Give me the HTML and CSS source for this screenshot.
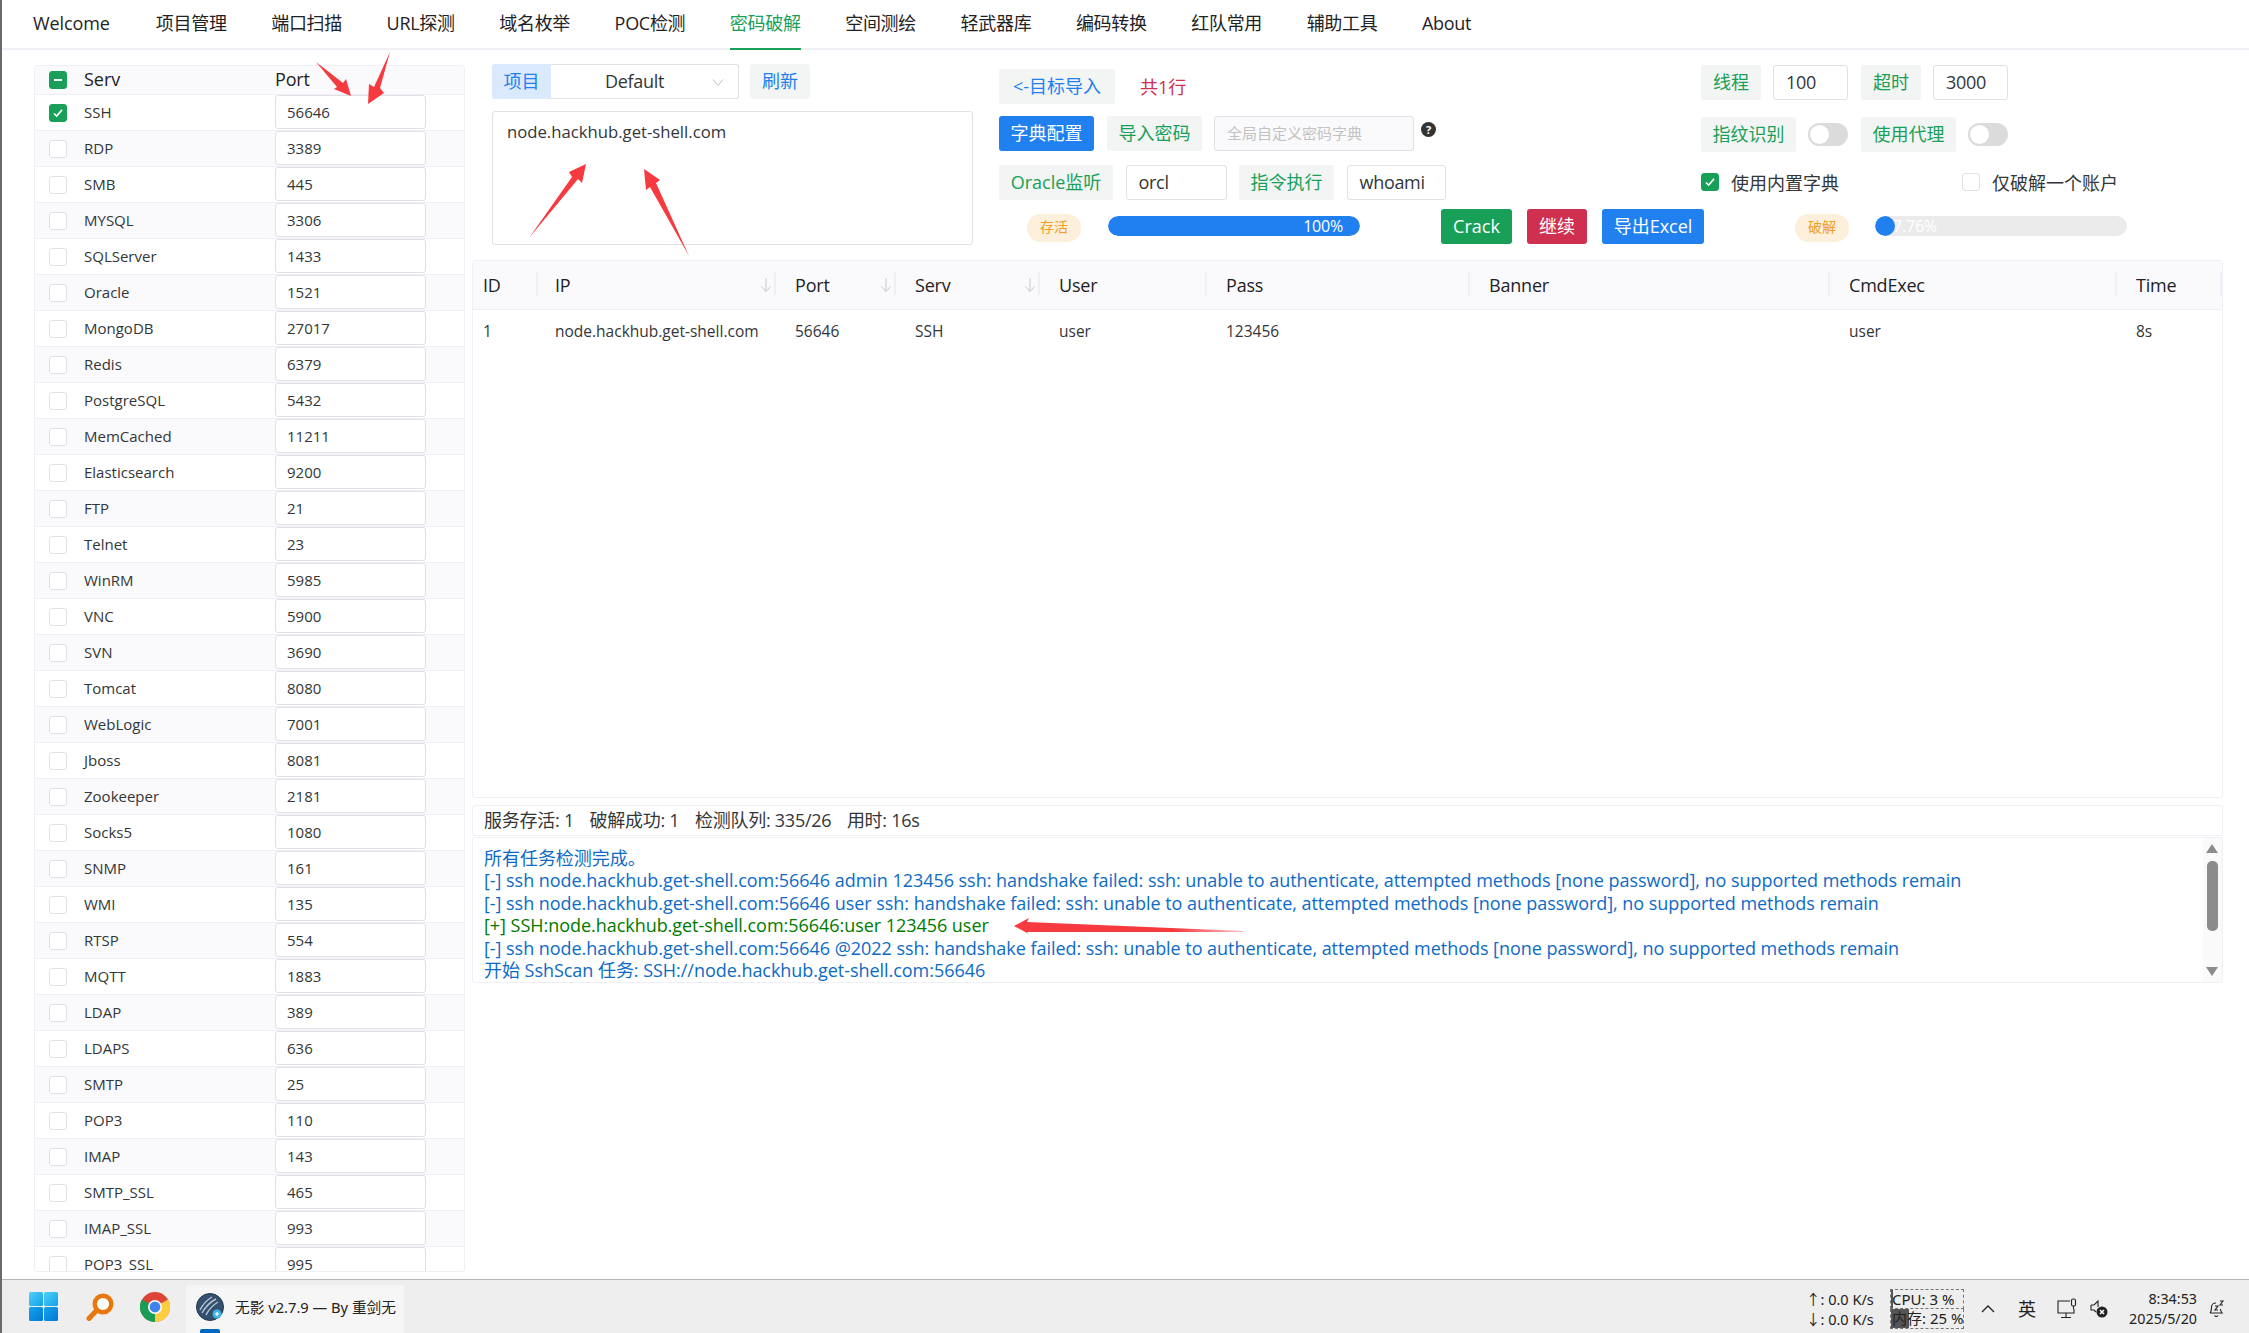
FILE: index.html
```html
<!DOCTYPE html>
<html lang="zh">
<head>
<meta charset="utf-8">
<title>无影</title>
<link rel="stylesheet" href="styles.css">
</head>
<body>
<div class="app">
  <nav class="nav">
    <span class="tab">Welcome</span><span class="tab">项目管理</span><span class="tab">端口扫描</span><span class="tab">URL探测</span><span class="tab">域名枚举</span><span class="tab">POC检测</span><span class="tab active">密码破解</span><span class="tab">空间测绘</span><span class="tab">轻武器库</span><span class="tab">编码转换</span><span class="tab">红队常用</span><span class="tab">辅助工具</span><span class="tab">About</span>
  </nav>
  <main class="work">
    <section class="services">
      <div class="svc-row svc-head"><span class="cb on minus"></span><span class="svc-name">Serv</span><span class="svc-port-h">Port</span></div>
      <div class="svc-row"><span class="cb on"><svg viewBox="0 0 18 18"><path d="M4.5 9.5l3 3 6-7" class="tick"/></svg></span><span class="svc-name">SSH</span><span class="port">56646</span></div>
      <div class="svc-row"><span class="cb"></span><span class="svc-name">RDP</span><span class="port">3389</span></div>
      <div class="svc-row"><span class="cb"></span><span class="svc-name">SMB</span><span class="port">445</span></div>
      <div class="svc-row"><span class="cb"></span><span class="svc-name">MYSQL</span><span class="port">3306</span></div>
      <div class="svc-row"><span class="cb"></span><span class="svc-name">SQLServer</span><span class="port">1433</span></div>
      <div class="svc-row"><span class="cb"></span><span class="svc-name">Oracle</span><span class="port">1521</span></div>
      <div class="svc-row"><span class="cb"></span><span class="svc-name">MongoDB</span><span class="port">27017</span></div>
      <div class="svc-row"><span class="cb"></span><span class="svc-name">Redis</span><span class="port">6379</span></div>
      <div class="svc-row"><span class="cb"></span><span class="svc-name">PostgreSQL</span><span class="port">5432</span></div>
      <div class="svc-row"><span class="cb"></span><span class="svc-name">MemCached</span><span class="port">11211</span></div>
      <div class="svc-row"><span class="cb"></span><span class="svc-name">Elasticsearch</span><span class="port">9200</span></div>
      <div class="svc-row"><span class="cb"></span><span class="svc-name">FTP</span><span class="port">21</span></div>
      <div class="svc-row"><span class="cb"></span><span class="svc-name">Telnet</span><span class="port">23</span></div>
      <div class="svc-row"><span class="cb"></span><span class="svc-name">WinRM</span><span class="port">5985</span></div>
      <div class="svc-row"><span class="cb"></span><span class="svc-name">VNC</span><span class="port">5900</span></div>
      <div class="svc-row"><span class="cb"></span><span class="svc-name">SVN</span><span class="port">3690</span></div>
      <div class="svc-row"><span class="cb"></span><span class="svc-name">Tomcat</span><span class="port">8080</span></div>
      <div class="svc-row"><span class="cb"></span><span class="svc-name">WebLogic</span><span class="port">7001</span></div>
      <div class="svc-row"><span class="cb"></span><span class="svc-name">Jboss</span><span class="port">8081</span></div>
      <div class="svc-row"><span class="cb"></span><span class="svc-name">Zookeeper</span><span class="port">2181</span></div>
      <div class="svc-row"><span class="cb"></span><span class="svc-name">Socks5</span><span class="port">1080</span></div>
      <div class="svc-row"><span class="cb"></span><span class="svc-name">SNMP</span><span class="port">161</span></div>
      <div class="svc-row"><span class="cb"></span><span class="svc-name">WMI</span><span class="port">135</span></div>
      <div class="svc-row"><span class="cb"></span><span class="svc-name">RTSP</span><span class="port">554</span></div>
      <div class="svc-row"><span class="cb"></span><span class="svc-name">MQTT</span><span class="port">1883</span></div>
      <div class="svc-row"><span class="cb"></span><span class="svc-name">LDAP</span><span class="port">389</span></div>
      <div class="svc-row"><span class="cb"></span><span class="svc-name">LDAPS</span><span class="port">636</span></div>
      <div class="svc-row"><span class="cb"></span><span class="svc-name">SMTP</span><span class="port">25</span></div>
      <div class="svc-row"><span class="cb"></span><span class="svc-name">POP3</span><span class="port">110</span></div>
      <div class="svc-row"><span class="cb"></span><span class="svc-name">IMAP</span><span class="port">143</span></div>
      <div class="svc-row"><span class="cb"></span><span class="svc-name">SMTP_SSL</span><span class="port">465</span></div>
      <div class="svc-row"><span class="cb"></span><span class="svc-name">IMAP_SSL</span><span class="port">993</span></div>
      <div class="svc-row"><span class="cb"></span><span class="svc-name">POP3_SSL</span><span class="port">995</span></div>
    </section>
    <section class="panel">
      <div class="toolbar">
        <div class="targets">
          <div class="targets-top">
            <div class="group">
              <span class="addon">项目</span>
              <span class="select">Default<svg class="chev" viewBox="0 0 14 14"><path d="M2 4.5l5 6 5-6"/></svg></span>
            </div>
            <span class="btn blue-t w60">刷新</span>
          </div>
          <div class="textarea">node.hackhub.get-shell.com</div>
        </div>
        <div class="controls">
          <div class="controls-top">
            <div class="col-b">
              <div class="line line1"><span class="btn blue-t w116">&lt;-目标导入</span><span class="count">共1行</span></div>
              <div class="line line2"><span class="btn solid-blue w95">字典配置</span><span class="btn green-t w95">导入密码</span><span class="input dict">全局自定义密码字典</span><span class="help">?</span></div>
              <div class="line line3"><span class="btn green-t w114">Oracle监听</span><span class="input w101">orcl</span><span class="btn green-t w95">指令执行</span><span class="input w99">whoami</span></div>
            </div>
            <div class="col-c">
              <div class="line c1"><span class="btn green-t w60">线程</span><span class="input w75">100</span><span class="btn green-t w60 ml13">超时</span><span class="input w75">3000</span></div>
              <div class="line c2"><span class="btn green-t w95">指纹识别</span><span class="switch"></span><span class="btn green-t w95 ml13">使用代理</span><span class="switch"></span></div>
              <div class="line c3"><span class="check-wrap"><span class="cb on"><svg viewBox="0 0 18 18"><path d="M4.5 9.5l3 3 6-7" class="tick"/></svg></span><span>使用内置字典</span></span><span class="check-wrap"><span class="cb"></span><span>仅破解一个账户</span></span></div>
            </div>
          </div>
          <div class="line status-line">
            <span class="tag tag1">存活</span>
            <span class="bar bar1"><span class="fill full">100%</span></span>
            <span class="btn solid-green act-crack">Crack</span>
            <span class="btn solid-red act-go">继续</span>
            <span class="btn solid-blue act-xls">导出Excel</span>
            <span class="tag tag2">破解</span>
            <span class="bar bar2"><span class="fill dot"></span><span class="bar-text">7.76%</span></span>
          </div>
        </div>
      </div>

      <div class="results">
        <div class="res-row res-head">
          <span class="cell sep">ID</span>
          <span class="cell sep">IP<svg class="sort" viewBox="0 0 12 16"><path d="M6 1v13M1.5 9.5L6 14.5l4.5-5"/></svg></span>
          <span class="cell sep">Port<svg class="sort" viewBox="0 0 12 16"><path d="M6 1v13M1.5 9.5L6 14.5l4.5-5"/></svg></span>
          <span class="cell sep">Serv<svg class="sort" viewBox="0 0 12 16"><path d="M6 1v13M1.5 9.5L6 14.5l4.5-5"/></svg></span>
          <span class="cell sep">User</span>
          <span class="cell sep">Pass</span>
          <span class="cell sep">Banner</span>
          <span class="cell sep">CmdExec</span>
          <span class="cell sep">Time</span>
        </div>
        <div class="res-row res-data">
          <span class="cell">1</span><span class="cell">node.hackhub.get-shell.com</span><span class="cell">56646</span><span class="cell">SSH</span><span class="cell">user</span><span class="cell">123456</span><span class="cell"></span><span class="cell">user</span><span class="cell">8s</span>
        </div>
      </div>

      <div class="stats"><span>服务存活: 1</span><span>破解成功: 1</span><span>检测队列: 335/26</span><span>用时: 16s</span></div>

      <div class="log">
        <div class="log-lines">
          <div>所有任务检测完成。</div>
          <div>[-] ssh node.hackhub.get-shell.com:56646 admin 123456 ssh: handshake failed: ssh: unable to authenticate, attempted methods [none password], no supported methods remain</div>
          <div>[-] ssh node.hackhub.get-shell.com:56646 user ssh: handshake failed: ssh: unable to authenticate, attempted methods [none password], no supported methods remain</div>
          <div class="ok">[+] SSH:node.hackhub.get-shell.com:56646:user 123456 user</div>
          <div>[-] ssh node.hackhub.get-shell.com:56646 @2022 ssh: handshake failed: ssh: unable to authenticate, attempted methods [none password], no supported methods remain</div>
          <div>开始 SshScan 任务: SSH://node.hackhub.get-shell.com:56646</div>
        </div>
        <div class="scroll">
          <span class="sc-up"></span>
          <span class="sc-thumb"></span>
          <span class="sc-down"></span>
        </div>
      </div>
    </section>
  </main>
  <footer class="taskbar">
    <svg class="tb-start" viewBox="0 0 29 29">
      <defs>
        <linearGradient id="w1" x1="0" y1="0" x2="1" y2="1"><stop offset="0" stop-color="#4fd0f8"/><stop offset="1" stop-color="#12a0e8"/></linearGradient>
        <linearGradient id="w2" x1="0" y1="0" x2="1" y2="1"><stop offset="0" stop-color="#14a4ea"/><stop offset="1" stop-color="#0478d4"/></linearGradient>
      </defs>
      <rect x="0" y="0" width="14" height="14" rx="1.5" fill="url(#w1)"/>
      <rect x="15" y="0" width="14" height="14" rx="1.5" fill="url(#w1)"/>
      <rect x="0" y="15" width="14" height="14" rx="1.5" fill="url(#w2)"/>
      <rect x="15" y="15" width="14" height="14" rx="1.5" fill="url(#w2)"/>
    </svg>
    <svg class="tb-search" viewBox="0 0 28 28">
      <circle cx="17" cy="11" r="8.3" fill="#fff" stroke="#e8780e" stroke-width="4.4"/>
      <path d="M10.5 17.5L3 25.5" stroke="#e8780e" stroke-width="5" stroke-linecap="round"/>
    </svg>
    <svg class="tb-chrome" viewBox="0 0 30 30">
      <circle cx="15" cy="15" r="15" fill="#db4437"/>
      <path d="M15 15L2 7.5A15 15 0 0 0 15 30z" fill="#199d55"/>
      <path d="M15 15L28 7.500A15 15 0 0 1 15 30z" fill="#ffcd40"/>
      <circle cx="15" cy="15" r="7" fill="#fff"/>
      <circle cx="15" cy="15" r="5.4" fill="#3f83ef"/>
    </svg>
    <div class="tb-app">
      <svg class="tb-app-icon" viewBox="0 0 28 28">
        <circle cx="14" cy="14" r="13.5" fill="#33506f"/>
        <circle cx="14" cy="14" r="13.5" fill="none" stroke="#25384e" stroke-width="1"/>
        <path d="M4 17C7 11 11 7 16 4M6 20C10 13 14 9 20 6M10 22C13 16 17 12 22 9" fill="none" stroke="#b9c6d6" stroke-width="1.4"/>
        <circle cx="21" cy="21" r="4.5" fill="#3fb4e8"/>
        <path d="M19 21h4M21 19v4" stroke="#fff" stroke-width="1.2"/>
      </svg>
      <span class="tb-title">无影 v2.7.9 — By 重剑无</span>
      <span class="tb-indicator"></span>
    </div>
    <div class="tray">
      <div class="tr-net"><span>↑: 0.0 K/s</span><span>↓: 0.0 K/s</span></div>
      <div class="tr-mon">
        <div class="mon-line"><span class="mon-fill cpu-fill"></span><span class="mon-txt">CPU: 3 %</span></div>
        <div class="mon-line"><span class="mon-fill mem-fill"></span><span class="mon-txt">内存: 25 %</span></div>
      </div>
      <svg class="tr-chev" viewBox="0 0 14 8"><path d="M1 7l6-6 6 6"/></svg>
      <span class="tr-ime">英</span>
      <svg class="tr-netico" viewBox="0 0 20 21"><path d="M13 3H1v12h16v-4M9 15v4M4 19.500h10"/><rect x="14.500" y="1" width="4" height="7" rx="1.500"/><path d="M16.500 8v3"/></svg>
      <svg class="tr-sound" viewBox="0 0 18 18"><path d="M1 5h3l4-4v6M1 5v5h3l2 2"/><circle cx="12" cy="12" r="5.500" class="x-bg"/><path d="M10 10l4 4M14 10l-4 4" class="x-mark"/></svg>
      <div class="tr-clock"><span>8:34:53</span><span>2025/5/20</span></div>
      <svg class="tr-bell" viewBox="0 0 18 20"><path d="M2 14c1.500-1.500 1.500-3 1.500-6 0-2.500 2-4 4.500-4M2 14h12c-1-1-1.500-2-1.500-4M6.500 16.500c.8 1.300 2.700 1.300 3.500 0"/><path d="M7 7h3L7 11h3M12 2h3l-3 4h3"/></svg>
    </div>
  </footer>
  <svg class="marks" viewBox="0 0 2249 1333">
    <defs>
      <linearGradient id="fade" gradientUnits="userSpaceOnUse" x1="1014" y1="0" x2="1243" y2="0"><stop offset="0" stop-color="#f63a3f"/><stop offset=".7" stop-color="#f63a3f"/><stop offset="1" stop-color="#fbb"/></linearGradient>
    </defs>
    <polygon class="mark" points="316,62 343,83 346,79 351,96 334,89 337,87"/>
    <polygon class="mark" points="390,52 380,88 384,93 368,104 369,84 374,87"/>
    <polygon class="mark" points="529,238 572,177 569,172 586,164 582,183 578,179"/>
    <polygon class="mark" points="689,256 650,187 646,190 644,169 660,180 656,183"/>
    <polygon fill="url(#fade)" points="1014,926 1029,918 1027,922 1243,931 1243,932 1027,932 1029,934"/>
  </svg>
</div>
</body>
</html>
```
FILE: styles.css
```css
* { box-sizing: border-box; }
html, body { margin: 0; padding: 0; }
body {
  background: #fff;
  color: #333639;
  font-family: "Open Sans", "Noto Sans CJK SC", sans-serif;
  font-size: 16px;
}
.app {
  position: relative;
  width: 2249px;
  height: 1333px;
  display: flex;
  flex-direction: column;
  border-left: 2px solid #6a6a6a;
  overflow: hidden;
}
.nav {
  height: 50px;
  flex: none;
  display: flex;
  align-items: flex-start;
  gap: 44.560px;
  padding-left: 31px;
  border-bottom: 2px solid #efeff5;
  font-size: 18px;
  color: #1f2225;
}
.tab { height: 50px; line-height: 46px; letter-spacing: -0.3px; white-space: nowrap; }
.tab:first-child { letter-spacing: -0.1px; margin-right: 1.500px; }
.tab.active { color: #18a058; border-bottom: 2px solid #18a058; }

.work { flex: 1; display: flex; min-height: 0; }
.services {
  width: 431px;
  height: 1207px;
  margin: 15px 0 0 32px;
  border: 1px solid #efeff5;
  border-radius: 3px;
  overflow: hidden;
  flex: none;
}
.svc-row {
  display: flex;
  align-items: center;
  height: 36px;
  padding-left: 14px;
  border-bottom: 1px solid #efeff5;
  font-size: 15px;
}
.svc-row:nth-child(odd) { background: #fafafc; }
.svc-head { height: 29px; background: #fafafc; font-size: 18px; color: #1f2225; }
.cb {
  flex: none;
  width: 18px;
  height: 18px;
  border: 1px solid #e0e0e6;
  border-radius: 3px;
  background: #fff;
  display: inline-block;
  position: relative;
}
.cb.on { background: #18a058; border-color: #18a058; }
.cb svg { display: block; width: 16px; height: 16px; }
.tick { fill: none; stroke: #fff; stroke-width: 1.8; }
.minus::after {
  content: "";
  position: absolute;
  left: 4px;
  right: 4px;
  top: 7px;
  height: 2px;
  background: #fff;
}
.svc-name { width: 191px; margin: -2px 0 0 17px; flex: none; }
.svc-port-h { letter-spacing: -0.2px; margin-top: -2px; }
.port {
  width: 151px;
  height: 34px;
  align-self: flex-start;
  flex: none;
  border: 1px solid #e0e0e6;
  border-radius: 3px;
  background: #fff;
  padding-left: 11px;
  line-height: 32px;
  font-size: 15px;
}

.panel { width: 1751px; margin-left: 7px; flex: none; display: flex; flex-direction: column; }
.toolbar { display: flex; height: 210px; flex: none; padding-top: 14px; }
.targets { width: 481px; margin-left: 20px; flex: none; }
.targets-top { display: flex; gap: 11px; }
.group { display: flex; height: 35px; }
.addon {
  width: 59px;
  background: #dbe9fc;
  color: #2080f0;
  font-size: 18px;
  line-height: 35px;
  text-align: center;
  border-radius: 3px 0 0 3px;
}
.select {
  width: 188px;
  height: 35px;
  border: 1px solid #e0e0e6;
  border-left: none;
  border-radius: 0 3px 3px 0;
  font-size: 18px;
  line-height: 33px;
  padding-left: 54px;
  position: relative;
  letter-spacing: -0.3px;
}
.chev {
  position: absolute;
  right: 13px;
  top: 10px;
  width: 14px;
  height: 14px;
  fill: none;
  stroke: #c2c2c2;
  stroke-width: 1;
}
.textarea {
  margin-top: 12px;
  height: 134px;
  border: 1px solid #e0e0e6;
  border-radius: 3px;
  padding: 8px 14px;
  font-size: 16.700px;
  line-height: 24px;
}
.controls { margin-left: 26px; width: 1224px; flex: none; display: flex; flex-direction: column; }
.controls-top { display: flex; height: 145px; }
.col-b { width: 702px; flex: none; }
.col-c { flex: 1; }
.line { display: flex; align-items: center; }
.btn {
  flex: none;
  height: 35px;
  line-height: 35px;
  text-align: center;
  border-radius: 3px;
  font-size: 18px;
  background: #f3f5f4;
  white-space: nowrap;
}
.blue-t { color: #2080f0; }
.green-t { color: #18a058; }
.solid-blue { background: #2080f0; color: #fff; }
.solid-green { background: #18a058; color: #fff; }
.solid-red { background: #d03050; color: #fff; }
.w60 { width: 60px; }
.w95 { width: 95px; }
.w114 { width: 114px; }
.w116 { width: 116px; }
.ml13 { margin-left: 13px; }
.count { margin: -2px 0 0 25px; color: #d03050; font-size: 18px; }
.input {
  flex: none;
  height: 35px;
  line-height: 33px;
  border: 1px solid #e0e0e6;
  border-radius: 3px;
  font-size: 18px;
  padding-left: 12px;
  background: #fff;
  letter-spacing: -0.3px;
}
.w75 { width: 75px; }
.w99 { width: 99px; }
.w101 { width: 101px; }
.line1 { margin-top: 5px; }
.line2 { margin-top: 12px; gap: 13px; }
.line3 { margin-top: 14px; gap: 12.500px; }
.dict {
  width: 200px;
  margin-left: -1px;
  background: #fafafc;
  color: #c2c2c2;
  font-size: 15px;
  letter-spacing: 0;
}
.help {
  width: 15px;
  height: 15px;
  margin: -8px 0 0 -6px;
  border-radius: 50%;
  background: #333;
  color: #fff;
  font-size: 11px;
  line-height: 15px;
  text-align: center;
  font-weight: 700;
}
.c1 { margin-top: 1px; gap: 12px; }
.c1 .ml13, .c2 .ml13 { margin-left: 1px; }
.c2 { margin-top: 17px; gap: 12px; }
.c3 { margin-top: 17px; }
.switch {
  flex: none;
  width: 40px;
  height: 23px;
  border-radius: 12px;
  background: #dbdbdb;
  position: relative;
}
.switch::after {
  content: "";
  position: absolute;
  left: 2px;
  top: 2px;
  width: 19px;
  height: 19px;
  border-radius: 50%;
  background: #fff;
}
.check-wrap { display: flex; align-items: center; gap: 12px; width: 261px; font-size: 18px; flex: none; }
.status-line { margin-top: 0; height: 35px; flex: none; }
.tag {
  flex: none;
  width: 54px;
  height: 28px;
  line-height: 26px;
  border-radius: 14px;
  background: #fcf0dc;
  color: #f0a020;
  font-size: 14px;
  text-align: center;
  margin-top: 2px;
}
.tag1 { margin-left: 28px; }
.tag2 { margin-left: 91px; }
.bar {
  flex: none;
  position: relative;
  height: 20px;
  border-radius: 10px;
  background: #ebebeb;
  margin-left: 27px;
  overflow: hidden;
  font-size: 16px;
  line-height: 20px;
  color: #fff;
  margin-top: -2px;
}
.bar1 { width: 252px; }
.bar2 { width: 252px; margin-left: 26px; }
.fill {
  display: block;
  height: 20px;
  background: #2080f0;
  border-radius: 10px;
  text-align: right;
}
.full { width: 100%; padding-right: 17px; letter-spacing: -0.2px; }
.dot { width: 20px; }
.bar-text { position: absolute; left: 18px; top: 0; letter-spacing: -0.2px; }
.act-crack { width: 71px; margin-left: 81px; }
.act-go { width: 60px; margin-left: 15px; }
.act-xls { width: 102px; margin-left: 15px; }

.results {
  height: 538px;
  flex: none;
  border: 1px solid #efeff5;
  border-radius: 3px;
}
.res-row {
  display: grid;
  grid-template-columns: 65px 238px 120px 144px 167px 263px 360px 287px 105px;
  align-items: center;
}
.res-head {
  height: 49px;
  background: #fafafc;
  border-bottom: 1px solid #efeff5;
  font-size: 18px;
  color: #1f2225;
}
.res-data { height: 42px; font-size: 15.500px; }
.cell { padding-left: 19px; position: relative; white-space: nowrap; }
.res-head .cell { letter-spacing: -0.2px; }
.res-row .cell:first-child { padding-left: 10px; }
.res-row .cell:nth-child(2) { padding-left: 17px; }
.sep::after {
  content: "";
  position: absolute;
  right: 0;
  top: -1px;
  width: 2px;
  height: 24px;
  background: #efeff5;
}
.sort {
  position: absolute;
  right: 4px;
  top: 4px;
  width: 12px;
  height: 16px;
  fill: none;
  stroke: #c8c8c8;
  stroke-width: 1;
}
.stats {
  margin-top: 7px;
  height: 31px;
  flex: none;
  display: flex;
  gap: 15.500px;
  align-items: center;
  padding: 0 0 3px 11px;
  border: 1px solid #efeff5;
  border-radius: 3px;
  font-size: 18px;
  letter-spacing: -0.25px;
}
.log {
  margin-top: 1px;
  height: 146px;
  flex: none;
  display: flex;
  justify-content: space-between;
  border: 1px solid #efeff5;
  border-radius: 3px;
  overflow: hidden;
}
.log-lines {
  padding: 8.500px 0 0 11px;
  font-size: 18px;
  line-height: 22.500px;
  color: #0d6bc6;
  white-space: nowrap;
  letter-spacing: -0.04px;
}
.ok { color: #007a00; }
.scroll {
  width: 19px;
  flex: none;
  background: #fafafa;
  position: relative;
  display: flex;
  flex-direction: column;
  align-items: center;
}
.sc-up, .sc-down {
  position: absolute;
  left: 3px;
  width: 0;
  height: 0;
  border-left: 6px solid transparent;
  border-right: 6px solid transparent;
}
.sc-up { top: 6px; border-bottom: 9px solid #8c8c8c; }
.sc-down { bottom: 6px; border-top: 9px solid #8c8c8c; }
.sc-thumb {
  margin-top: 23px;
  width: 11px;
  height: 70px;
  border-radius: 5px;
  background: #8c8c8c;
}

.taskbar {
  height: 54px;
  flex: none;
  display: flex;
  align-items: center;
  background: #eeeeee;
  border-top: 1px solid #b5b5b5;
  color: #222;
  font-family: "Noto Sans", "Noto Sans CJK SC", sans-serif;
}
.tb-start { width: 29px; height: 29px; margin-left: 27px; flex: none; }
.tb-search { width: 28px; height: 28px; margin-left: 28px; flex: none; }
.tb-chrome { width: 30px; height: 30px; margin-left: 26px; flex: none; }
.tb-app {
  position: relative;
  width: 218px;
  align-self: stretch;
  margin: 5px 0 0 16px;
  flex: none;
  background: #f6f6f6;
  border-radius: 4px 4px 0 0;
  display: flex;
  align-items: center;
  padding: 0 0 5px 10px;
}
.tb-app-icon { width: 28px; height: 28px; flex: none; }
.tb-title { margin-left: 11px; font-size: 14.700px; white-space: nowrap; }
.tb-indicator {
  position: absolute;
  left: 14px;
  bottom: 0;
  width: 20px;
  height: 4px;
  border-radius: 2px 2px 0 0;
  background: #0067c0;
}
.tray { margin-left: auto; display: flex; align-items: center; padding: 4px 23px 0 0; }
.tr-net { display: flex; flex-direction: column; width: 65px; font-size: 14.500px; line-height: 20px; white-space: nowrap; }
.tr-mon { margin-left: 19px; width: 74px; font-size: 15px; }
.mon-line {
  position: relative;
  height: 20px;
  line-height: 19px;
  border: 1px dashed #777;
  white-space: nowrap;
}
.mon-line + .mon-line { border-top: none; }
.mon-fill { position: absolute; left: 0; top: 0; bottom: 0; background: #555; }
.cpu-fill { width: 2px; }
.mem-fill { width: 18px; }
.mon-txt { position: relative; padding-left: 1px; }
.tr-chev { width: 14px; height: 8px; margin-left: 17px; fill: none; stroke: #222; stroke-width: 1.300; flex: none; }
.tr-ime { margin-left: 23px; font-size: 18px; line-height: 20px; width: 18px; flex: none; }
.tr-netico { width: 20px; height: 21px; margin-left: 21px; fill: none; stroke: #222; stroke-width: 1.100; flex: none; }
.tr-sound { width: 18px; height: 18px; margin-left: 13px; fill: none; stroke: #222; stroke-width: 1.100; flex: none; }
.x-bg { fill: #222; stroke: none; }
.x-mark { stroke: #fff; stroke-width: 1.500; }
.tr-clock {
  width: 68px;
  margin-left: 21px;
  display: flex;
  flex-direction: column;
  align-items: flex-end;
  font-size: 14.300px;
  line-height: 20px;
  white-space: nowrap;
}
.tr-bell { width: 18px; height: 20px; margin-left: 11px; fill: none; stroke: #222; stroke-width: 1.100; flex: none; }

.marks {
  position: absolute;
  left: -2px;
  top: 0;
  width: 2249px;
  height: 1333px;
  pointer-events: none;
}
.mark { fill: #f63a3f; }
```
